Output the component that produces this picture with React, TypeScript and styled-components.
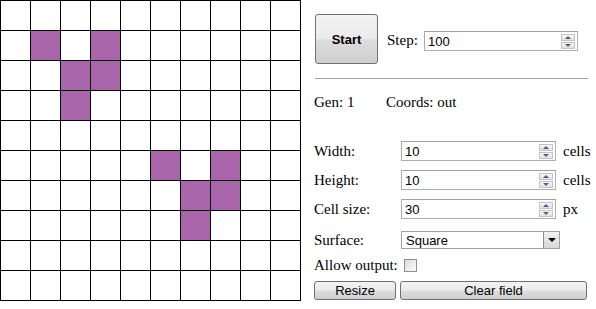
import React from "react";
import styled, { createGlobalStyle } from "styled-components";

const Global = createGlobalStyle`
  html, body { margin: 0; padding: 0; background: #fff; }
  body { font-family: "Liberation Serif", "Times New Roman", serif; font-size: 15px; color: #000; }
`;

const Page = styled.div`
  display: flex;
  align-items: flex-start;
  width: 596px;
  height: 309px;
  overflow: hidden;
`;

const Board = styled.div`
  display: grid;
  grid-template-columns: repeat(10, 29px);
  grid-template-rows: repeat(10, 29px);
  gap: 1px;
  padding: 1px;
  background: #000;
  flex: none;
`;

const Cell = styled.div<{ $alive: boolean }>`
  background: ${(p) => (p.$alive ? "#a865a9" : "#fff")};
`;

const Panel = styled.div`
  display: flex;
  flex-direction: column;
  padding: 14px 0 0 13px;
  width: 273px;
`;

const TopRow = styled.div`
  display: flex;
  align-items: center;
  height: 50px;
`;

const BigButton = styled.button`
  width: 63px;
  height: 50px;
  margin-left: 1px;
  border: 1px solid #707070;
  border-radius: 3px;
  background: linear-gradient(#f2f2f2 0%, #ebebeb 48%, #dddddd 52%, #cfcfcf 100%);
  font-family: "Liberation Sans", Arial, sans-serif;
  font-weight: bold;
  font-size: 13px;
  color: #000;
  padding: 0;
`;

const StepLabel = styled.span`
  margin-left: 9px;
  margin-top: 3px;
  width: 37px;
`;

const Spin = styled.div<{ $w: number }>`
  display: flex;
  align-items: center;
  width: ${(p) => p.$w}px;
  height: 20px;
  box-sizing: border-box;
  border: 1px solid #abadb3;
  border-top-color: #a0a0a0;
  background: #fff;
  padding: 0 2px 0 3px;
  flex: none;
`;

const SpinText = styled.span`
  flex: 1;
  font-family: "Liberation Sans", Arial, sans-serif;
  font-size: 13px;
`;

const Arrows = styled.div`
  display: flex;
  flex-direction: column;
  gap: 1px;
  width: 14px;
`;

const ArrowBtn = styled.div<{ $up: boolean }>`
  height: 7px;
  box-sizing: border-box;
  border: 1px solid #c4c4c4;
  background: linear-gradient(#f6f6f6, #e2e2e2);
  display: flex;
  align-items: center;
  justify-content: center;
  &::after {
    content: "";
    border-left: 3px solid transparent;
    border-right: 3px solid transparent;
    ${(p) => (p.$up ? "border-bottom: 3px solid #4e5f80;" : "border-top: 3px solid #4e5f80;")}
  }
`;

const Rule = styled.div`
  height: 1px;
  background: #a0a0a0;
  margin: 14px 0 0 1px;
  width: 273px;
`;

const InfoRow = styled.div`
  display: flex;
  margin-top: 15px;
  line-height: 17px;
`;

const InfoItem = styled.span`
  width: 72px;
`;

const FormRow = styled.div<{ $mt: number }>`
  display: flex;
  align-items: center;
  margin-top: ${(p) => p.$mt}px;
`;

const Label = styled.span`
  width: 87px;
  flex: none;
`;

const Unit = styled.span`
  margin-left: 7px;
`;

const Select = styled.div`
  display: flex;
  align-items: center;
  width: 159px;
  height: 18px;
  box-sizing: border-box;
  border: 1px solid #a0a0a0;
  background: #fff;
  padding-left: 4px;
  font-family: "Liberation Sans", Arial, sans-serif;
  font-size: 13px;
`;

const SelectText = styled.span`
  flex: 1;
`;

const SelectArrow = styled.div`
  width: 16px;
  height: 16px;
  box-sizing: border-box;
  border-left: 1px solid #8e8e8e;
  background: linear-gradient(#f2f2f2, #d8d8d8);
  display: flex;
  align-items: center;
  justify-content: center;
  &::after {
    content: "";
    border-left: 4px solid transparent;
    border-right: 4px solid transparent;
    border-top: 4px solid #000;
  }
`;

const Check = styled.span`
  width: 13px;
  height: 13px;
  box-sizing: border-box;
  border: 1px solid #8f8f8f;
  background: linear-gradient(135deg, #dcdcdc, #fbfbfb);
  margin-left: 6px;
`;

const ButtonRow = styled.div`
  display: flex;
  gap: 4px;
  margin-top: 7px;
`;

const Btn = styled.button<{ $w: number }>`
  width: ${(p) => p.$w}px;
  height: 19px;
  border: 1px solid #707070;
  border-radius: 3px;
  background: linear-gradient(#f2f2f2 0%, #ebebeb 48%, #dddddd 52%, #cfcfcf 100%);
  font-family: "Liberation Sans", Arial, sans-serif;
  font-size: 13px;
  color: #000;
  padding: 0;
  line-height: 15px;
`;

const alive = new Set([
  "1,1", "1,3", "2,2", "2,3", "3,2",
  "5,5", "5,7", "6,6", "6,7", "7,6",
]);

const SpinBox = ({ value, w }: { value: string; w: number }) => (
  <Spin $w={w}>
    <SpinText>{value}</SpinText>
    <Arrows>
      <ArrowBtn $up />
      <ArrowBtn $up={false} />
    </Arrows>
  </Spin>
);

export default function App() {
  const cells = [];
  for (let r = 0; r < 10; r++)
    for (let c = 0; c < 10; c++)
      cells.push(<Cell key={`${r}-${c}`} $alive={alive.has(`${r},${c}`)} />);
  return (
    <>
      <Global />
      <Page>
        <Board>{cells}</Board>
        <Panel>
          <TopRow>
            <BigButton>Start</BigButton>
            <StepLabel>Step:</StepLabel>
            <div style={{ marginTop: 4 }}>
              <SpinBox value="100" w={154} />
            </div>
          </TopRow>
          <Rule />
          <InfoRow>
            <InfoItem>Gen: 1</InfoItem>
            <span>Coords: out</span>
          </InfoRow>
          <FormRow $mt={30}>
            <Label>Width:</Label>
            <SpinBox value="10" w={155} />
            <Unit>cells</Unit>
          </FormRow>
          <FormRow $mt={9}>
            <Label>Height:</Label>
            <SpinBox value="10" w={155} />
            <Unit>cells</Unit>
          </FormRow>
          <FormRow $mt={9}>
            <Label>Cell size:</Label>
            <SpinBox value="30" w={155} />
            <Unit>px</Unit>
          </FormRow>
          <FormRow $mt={12}>
            <Label>Surface:</Label>
            <Select>
              <SelectText>Square</SelectText>
              <SelectArrow />
            </Select>
          </FormRow>
          <FormRow $mt={8}>
            <span>Allow output:</span>
            <Check />
          </FormRow>
          <ButtonRow>
            <Btn $w={82}>Resize</Btn>
            <Btn $w={187}>Clear field</Btn>
          </ButtonRow>
        </Panel>
      </Page>
    </>
  );
}
